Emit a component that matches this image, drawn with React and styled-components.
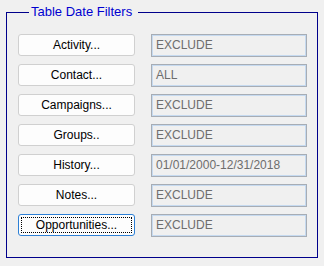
import React from 'react';
import styled, { createGlobalStyle } from 'styled-components';

const GlobalStyle = createGlobalStyle`
  html, body {
    margin: 0;
    padding: 0;
    background: #f0f0f0;
  }
  body {
    font-family: "Liberation Sans", Arial, sans-serif;
  }
`;

const Frame = styled.fieldset`
  box-sizing: border-box;
  width: 312px;
  margin: 4px 0 0 6px;
  padding: 14px 0 20px 11px;
  border: 1px solid #00008b;
  min-width: 0;
`;

const Caption = styled.legend`
  margin-left: 11px;
  padding: 0 6px 0 2px;
  font-size: 13px;
  line-height: 16px;
  color: #0000d0;
`;

const Rows = styled.div`
  display: flex;
  flex-direction: column;
  gap: 7px;
`;

const Row = styled.div`
  display: flex;
  align-items: flex-start;
  gap: 16px;
`;

const Button = styled.button`
  position: relative;
  box-sizing: border-box;
  width: 117px;
  height: 22px;
  margin: 0;
  padding: 0;
  background: #fdfdfd;
  border: 1px solid ${p => (p.$focused ? '#2d80d6' : '#d0d0d0')};
  border-radius: 3px;
  font-family: "Liberation Sans", Arial, sans-serif;
  font-size: 12px;
  color: #000;
  text-align: center;

  &::after {
    content: '';
    display: ${p => (p.$focused ? 'block' : 'none')};
    position: absolute;
    inset: 2px;
    border: 1px dotted #000;
  }
`;

const Field = styled.div`
  box-sizing: border-box;
  width: 156px;
  height: 23px;
  padding: 0 4px;
  border: 1px solid #a7adb5;
  box-shadow: inset 0 0 0 1px #c6daf0;
  background: #f0f0f0;
  font-size: 12px;
  line-height: 21px;
  color: #6d6d6d;
`;

const filters = [
  { label: 'Activity...', value: 'EXCLUDE' },
  { label: 'Contact...', value: 'ALL' },
  { label: 'Campaigns...', value: 'EXCLUDE' },
  { label: 'Groups..', value: 'EXCLUDE' },
  { label: 'History...', value: '01/01/2000-12/31/2018' },
  { label: 'Notes...', value: 'EXCLUDE' },
  { label: 'Opportunities...', value: 'EXCLUDE', focused: true },
];

export default function App() {
  return (
    <>
      <GlobalStyle />
      <Frame>
        <Caption>Table Date Filters</Caption>
        <Rows>
          {filters.map(f => (
            <Row key={f.label}>
              <Button $focused={f.focused}>{f.label}</Button>
              <Field>{f.value}</Field>
            </Row>
          ))}
        </Rows>
      </Frame>
    </>
  );
}
